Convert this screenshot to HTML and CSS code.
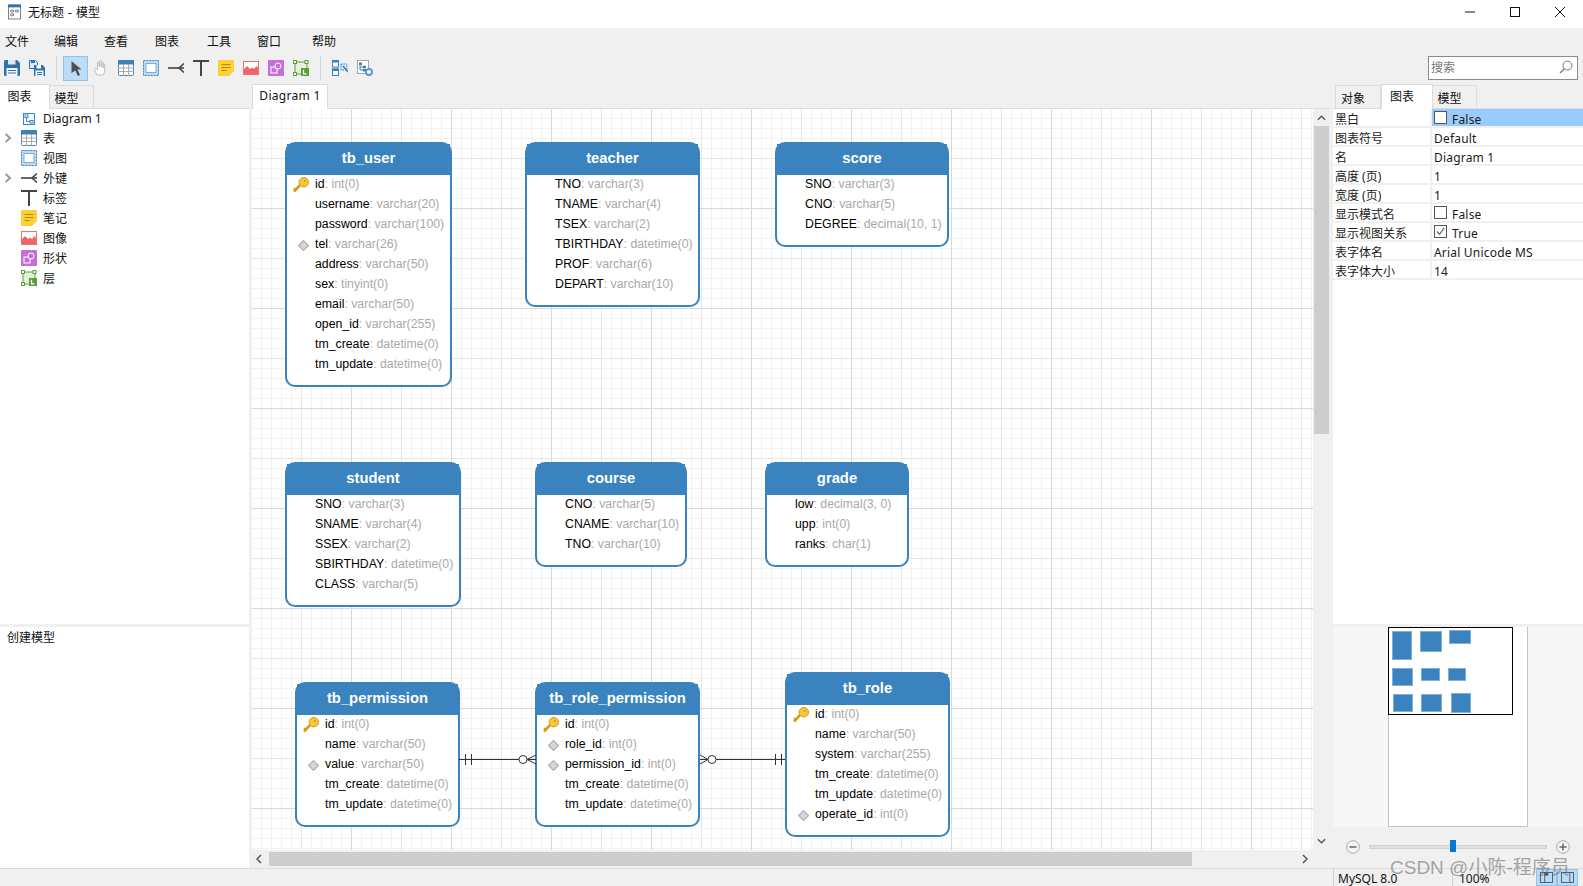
FILE: index.html

```html
<!DOCTYPE html>
<html lang="en">
<head>
  <meta charset="UTF-8" />
  <title>无标题 - 模型</title>
  <link rel="stylesheet" href="styles.css">
</head>
<body>
<svg class="defs" width="0" height="0">
  <symbol id="i-save" viewBox="0 0 16 16"><path d="M0 1.5C0 .7.7 0 1.5 0H13l3 3v11.5c0 .8-.7 1.5-1.5 1.5h-13C.7 16 0 15.300 0 14.500z" fill="#2e72ab"/><rect x="4" y="0" width="7.500" height="4.500" fill="#dfe9f2"/><rect x="2.500" y="8" width="11" height="8" fill="#f4f7fa"/><path d="M4 10.500h8M4 13h8" stroke="#2e72ab"/></symbol>
  <symbol id="i-saveall" viewBox="0 0 16 16"><path d="M.5 .5h6l2 2v6h-8z" fill="#dfe9f2" stroke="#2e72ab"/><rect x="2" y="0" width="4" height="3" fill="#2e72ab"/><path d="M5 5h8.500L16 7.500V16H5z" fill="#2e72ab"/><rect x="7.500" y="5" width="4.500" height="3.500" fill="#fff"/><rect x="6.500" y="10.500" width="8" height="5.500" fill="#fff"/><path d="M8 12.500h5M8 14.500h5" stroke="#2e72ab"/></symbol>
  <symbol id="i-pointer" viewBox="0 0 16 16"><path d="M3.500 1 13.500 9.500H9.500L12 15l-2.200 1-2.400-5.600L3.500 13z" fill="#4f4f4f"/></symbol>
  <symbol id="i-hand" viewBox="0 0 16 16"><path d="M4 15 1.500 9.500c-.5-1.300 1-2 1.800-.9L4.500 10V3c0-1.300 1.800-1.300 1.800 0v4-5.500c0-1.300 1.900-1.300 1.900 0V7V2.500c0-1.300 1.800-1.300 1.800 0V8V4.500c0-1.200 1.700-1.200 1.700 0V10c0 2.500-1 4-1.500 5z" fill="#fff" stroke="#bcbcbc"/></symbol>
  <symbol id="i-table" viewBox="0 0 16 16"><rect x=".5" y=".5" width="15" height="15" rx="1" fill="#fff" stroke="#4a86b8"/><path d="M1 0h14a1 1 0 0 1 1 1v3.500H0V1a1 1 0 0 1 1-1z" fill="#3d80b8"/><path d="M0 8h16M0 11.500h16M5.500 4v12M10.500 4v12" stroke="#a9a9a9"/></symbol>
  <symbol id="i-view" viewBox="0 0 16 16"><rect x=".5" y=".5" width="15" height="15" fill="#b9dbf6" stroke="#3d80b8" stroke-dasharray="2 1"/><rect x="3" y="3.500" width="10" height="9" fill="#fff" stroke="#7cb0da"/></symbol>
  <symbol id="i-fk" viewBox="0 0 16 16"><path d="M0 8h16" stroke="#444" stroke-width="1.600"/><path d="M16 3.500 11 8l5 4.500" fill="none" stroke="#444" stroke-width="1.600"/></symbol>
  <symbol id="i-label" viewBox="0 0 16 16"><path d="M0 1h16M8 1v15" stroke="#444" stroke-width="2" fill="none"/></symbol>
  <symbol id="i-note" viewBox="0 0 16 16"><path d="M1 0h14a1 1 0 0 1 1 1v10l-5 5H1a1 1 0 0 1-1-1V1a1 1 0 0 1 1-1z" fill="#fdd136"/><path d="M3.500 4.500h9M3.500 7.500h9M3.500 10.500h5" stroke="#b78510"/></symbol>
  <symbol id="i-image" viewBox="0 0 16 16"><rect x=".5" y="1.500" width="15" height="13" fill="#fff" stroke="#ee6e73"/><path d="M1 13 V9l3-3 3 3 2-1.500L11 9l2.500-3L15 8v6H1z" fill="#f0636b"/></symbol>
  <symbol id="i-shape" viewBox="0 0 16 16"><rect width="16" height="16" rx="1" fill="#c76fd9"/><rect x="3" y="7" width="6" height="6" fill="none" stroke="#fff"/><circle cx="10" cy="6" r="3" fill="#c76fd9" stroke="#fff"/></symbol>
  <symbol id="i-layer" viewBox="0 0 16 16"><rect x="2" y="2" width="12" height="12" fill="#e6f2da" stroke="#5a9e3a"/><rect x=".5" y=".5" width="3" height="3" fill="#fff" stroke="#5a9e3a"/><rect x="12" y=".5" width="3" height="3" fill="#fff" stroke="#5a9e3a"/><rect x=".5" y="12.500" width="3" height="3" fill="#fff" stroke="#5a9e3a"/><rect x="8" y="8" width="8" height="8" fill="#5a9e3a"/><path d="M10.500 9.800v4h3" stroke="#fff" fill="none" stroke-width="1.300"/></symbol>
  <symbol id="i-find" viewBox="0 0 16 16"><rect x=".5" y=".5" width="6" height="6.500" fill="#fff" stroke="#3d80b8"/><rect x="0" y="0" width="7" height="2.500" fill="#3d80b8"/><rect x=".5" y="9" width="6" height="6.500" fill="#fff" stroke="#3d80b8"/><rect x="0" y="8.500" width="7" height="2.500" fill="#3d80b8"/><rect x="9" y="4" width="6" height="6" fill="#d5e8f7" stroke="#3d80b8" stroke-dasharray="1.500 1"/><path d="m11 6 5 6" stroke="#3d80b8" stroke-width="1.500"/></symbol>
  <symbol id="i-viewdg" viewBox="0 0 16 16"><rect x=".5" y=".5" width="11" height="13" fill="#fff" stroke="#a5a5a5"/><path d="M3 4v6h3M3 7h3" stroke="#3d80b8" fill="none"/><rect x="2" y="2.500" width="3" height="2.500" fill="#3d80b8"/><rect x="6" y="5.800" width="3" height="2.500" fill="#3d80b8"/><rect x="6" y="9" width="3" height="2.500" fill="#3d80b8"/><circle cx="12" cy="12" r="3" fill="#fff" stroke="#5b93c4" stroke-width="1.800"/></symbol>
  <symbol id="i-diagram" viewBox="0 0 12 12"><rect x=".5" y=".5" width="11" height="11" fill="#fff" stroke="#2f87e0"/><path d="M3.500 4v4.500H7" stroke="#2f87e0" fill="none"/><rect x="2" y="2" width="3" height="2.500" fill="none" stroke="#2f87e0"/><rect x="7" y="7.500" width="3" height="2.500" fill="none" stroke="#2f87e0"/></symbol>
  <symbol id="i-key" viewBox="0 0 16 16"><path d="M1 14.500 7 8.200" stroke="#d49b17" stroke-width="2.600" fill="none"/><path d="M2.600 13 1 11" stroke="#d49b17" stroke-width="1.400"/><circle cx="10.800" cy="5.200" r="4.700" fill="#f8c63d" stroke="#d49b17"/><circle cx="11.800" cy="4" r="1" fill="#d49b17"/></symbol>
  <symbol id="i-fkey" viewBox="0 0 10 10"><path d="M5 .5 9.500 5 5 9.500 .5 5z" fill="#d6d6d6" stroke="#acacac"/></symbol>
  <symbol id="i-next" viewBox="0 0 8 10"><path d="M1.500 1 6 5 1.500 9" fill="none" stroke="#9b9b9b" stroke-width="2"/></symbol>
</svg>

<header class="titlebar">
  <svg class="app-icon" viewBox="0 0 14 16"><rect x=".5" y=".5" width="13" height="15" fill="#fff" stroke="#777"/><rect width="14" height="3" fill="#2e72ab"/><path d="M3 6h3v2H3zM8 6h3v2H8zM3 10h3v2H3z" fill="none" stroke="#777"/></svg>
  <span class="title-text">无标题 - 模型</span>
  <div class="win-btns">
    <svg viewBox="0 0 12 12"><path d="M1 6h10" stroke="#111"/></svg>
    <svg viewBox="0 0 12 12"><rect x="1.500" y="1.500" width="9" height="9" fill="none" stroke="#111"/></svg>
    <svg viewBox="0 0 12 12"><path d="m1 1 10 10M11 1 1 11" stroke="#111"/></svg>
  </div>
</header>

<nav class="menubar">
  <span>文件</span><span>编辑</span><span>查看</span><span>图表</span><span>工具</span><span>窗口</span><span>帮助</span>
</nav>

<div class="toolbar">
  <button class="tool"><svg><use href="#i-save"/></svg></button>
  <button class="tool"><svg><use href="#i-saveall"/></svg></button>
  <i class="tool-sep"></i>
  <button class="tool active"><svg><use href="#i-pointer"/></svg></button>
  <button class="tool"><svg><use href="#i-hand"/></svg></button>
  <button class="tool"><svg><use href="#i-table"/></svg></button>
  <button class="tool"><svg><use href="#i-view"/></svg></button>
  <button class="tool"><svg><use href="#i-fk"/></svg></button>
  <button class="tool"><svg><use href="#i-label"/></svg></button>
  <button class="tool"><svg><use href="#i-note"/></svg></button>
  <button class="tool"><svg><use href="#i-image"/></svg></button>
  <button class="tool"><svg><use href="#i-shape"/></svg></button>
  <button class="tool"><svg><use href="#i-layer"/></svg></button>
  <i class="tool-sep"></i>
  <button class="tool"><svg><use href="#i-find"/></svg></button>
  <button class="tool"><svg><use href="#i-viewdg"/></svg></button>
  <div class="search">
    <span>搜索</span>
    <svg viewBox="0 0 14 14"><circle cx="8.500" cy="5.500" r="4.500" fill="none" stroke="#777"/><path d="M5.300 8.700 1 13" stroke="#777" stroke-width="1.300"/></svg>
  </div>
</div>

<main class="main">
  <aside class="left">
    <div class="tabs">
      <span class="tab active tab-left">图表</span>
      <span class="tab tab-model">模型</span>
    </div>
    <ul class="tree">
      <li><svg class="ico-small"><use href="#i-diagram"/></svg><span>Diagram 1</span></li>
      <li><svg class="arrow"><use href="#i-next"/></svg><svg><use href="#i-table"/></svg><span>表</span></li>
      <li><svg><use href="#i-view"/></svg><span>视图</span></li>
      <li><svg class="arrow"><use href="#i-next"/></svg><svg><use href="#i-fk"/></svg><span>外键</span></li>
      <li><svg><use href="#i-label"/></svg><span>标签</span></li>
      <li><svg><use href="#i-note"/></svg><span>笔记</span></li>
      <li><svg><use href="#i-image"/></svg><span>图像</span></li>
      <li><svg><use href="#i-shape"/></svg><span>形状</span></li>
      <li><svg><use href="#i-layer"/></svg><span>层</span></li>
    </ul>
    <div class="hint">创建模型</div>
  </aside>

  <section class="center">
    <div class="tabs tabs-doc">
      <span class="tab active tab-doc">Diagram 1</span>
    </div>
    <div class="work">
      <div class="canvas">
        <div class="er t-user">
          <h3>tb_user</h3>
          <div class="row"><svg class="key"><use href="#i-key"/></svg><b>id</b>: int(0)</div>
          <div class="row"><b>username</b>: varchar(20)</div>
          <div class="row"><b>password</b>: varchar(100)</div>
          <div class="row"><svg class="fkey"><use href="#i-fkey"/></svg><b>tel</b>: varchar(26)</div>
          <div class="row"><b>address</b>: varchar(50)</div>
          <div class="row"><b>sex</b>: tinyint(0)</div>
          <div class="row"><b>email</b>: varchar(50)</div>
          <div class="row"><b>open_id</b>: varchar(255)</div>
          <div class="row"><b>tm_create</b>: datetime(0)</div>
          <div class="row"><b>tm_update</b>: datetime(0)</div>
        </div>
        <div class="er t-teacher">
          <h3>teacher</h3>
          <div class="row"><b>TNO</b>: varchar(3)</div>
          <div class="row"><b>TNAME</b>: varchar(4)</div>
          <div class="row"><b>TSEX</b>: varchar(2)</div>
          <div class="row"><b>TBIRTHDAY</b>: datetime(0)</div>
          <div class="row"><b>PROF</b>: varchar(6)</div>
          <div class="row"><b>DEPART</b>: varchar(10)</div>
        </div>
        <div class="er t-score">
          <h3>score</h3>
          <div class="row"><b>SNO</b>: varchar(3)</div>
          <div class="row"><b>CNO</b>: varchar(5)</div>
          <div class="row"><b>DEGREE</b>: decimal(10, 1)</div>
        </div>
        <div class="er t-student">
          <h3>student</h3>
          <div class="row"><b>SNO</b>: varchar(3)</div>
          <div class="row"><b>SNAME</b>: varchar(4)</div>
          <div class="row"><b>SSEX</b>: varchar(2)</div>
          <div class="row"><b>SBIRTHDAY</b>: datetime(0)</div>
          <div class="row"><b>CLASS</b>: varchar(5)</div>
        </div>
        <div class="er t-course">
          <h3>course</h3>
          <div class="row"><b>CNO</b>: varchar(5)</div>
          <div class="row"><b>CNAME</b>: varchar(10)</div>
          <div class="row"><b>TNO</b>: varchar(10)</div>
        </div>
        <div class="er t-grade">
          <h3>grade</h3>
          <div class="row"><b>low</b>: decimal(3, 0)</div>
          <div class="row"><b>upp</b>: int(0)</div>
          <div class="row"><b>ranks</b>: char(1)</div>
        </div>
        <div class="er t-perm">
          <h3>tb_permission</h3>
          <div class="row"><svg class="key"><use href="#i-key"/></svg><b>id</b>: int(0)</div>
          <div class="row"><b>name</b>: varchar(50)</div>
          <div class="row"><svg class="fkey"><use href="#i-fkey"/></svg><b>value</b>: varchar(50)</div>
          <div class="row"><b>tm_create</b>: datetime(0)</div>
          <div class="row"><b>tm_update</b>: datetime(0)</div>
        </div>
        <div class="er t-roleperm">
          <h3>tb_role_permission</h3>
          <div class="row"><svg class="key"><use href="#i-key"/></svg><b>id</b>: int(0)</div>
          <div class="row"><svg class="fkey"><use href="#i-fkey"/></svg><b>role_id</b>: int(0)</div>
          <div class="row"><svg class="fkey"><use href="#i-fkey"/></svg><b>permission_id</b>: int(0)</div>
          <div class="row"><b>tm_create</b>: datetime(0)</div>
          <div class="row"><b>tm_update</b>: datetime(0)</div>
        </div>
        <div class="er t-role">
          <h3>tb_role</h3>
          <div class="row"><svg class="key"><use href="#i-key"/></svg><b>id</b>: int(0)</div>
          <div class="row"><b>name</b>: varchar(50)</div>
          <div class="row"><b>system</b>: varchar(255)</div>
          <div class="row"><b>tm_create</b>: datetime(0)</div>
          <div class="row"><b>tm_update</b>: datetime(0)</div>
          <div class="row"><svg class="fkey"><use href="#i-fkey"/></svg><b>operate_id</b>: int(0)</div>
        </div>
        <!-- relation lines, in canvas coords -->
        <svg class="links" viewBox="0 0 1061 741">
          <g fill="none" stroke="#333">
            <path d="M207 650.500h77M213.500 645v11M219.500 645v11"/>
            <circle cx="271" cy="650.500" r="4" fill="#fff"/>
            <path d="M275 650.500 284 646M275 650.500 284 655"/>
            <path d="M448 650.500h85M523.500 645v11M529.500 645v11"/>
            <circle cx="460" cy="650.500" r="4" fill="#fff"/>
            <path d="M456 650.500 448 646M456 650.500 448 655"/>
          </g>
        </svg>
      </div>
      <div class="vscroll">
        <svg class="up" viewBox="0 0 10 6"><path d="M1 5 5 1l4 4" fill="none" stroke="#555" stroke-width="1.500"/></svg>
        <i class="thumb-v"></i>
        <svg class="down" viewBox="0 0 10 6"><path d="M1 1l4 4 4-4" fill="none" stroke="#555" stroke-width="1.500"/></svg>
      </div>
    </div>
    <div class="hscroll">
      <svg viewBox="0 0 6 10"><path d="M5 1 1 5l4 4" fill="none" stroke="#555" stroke-width="1.500"/></svg>
      <i class="thumb-h"></i>
      <svg class="right-arrow" viewBox="0 0 6 10"><path d="M1 1l4 4-4 4" fill="none" stroke="#555" stroke-width="1.500"/></svg>
    </div>
  </section>

  <aside class="right">
    <div class="tabs tabs-props">
      <span class="tab tab-obj">对象</span>
      <span class="tab active tab-dg">图表</span>
      <span class="tab tab-model">模型</span>
    </div>
    <div class="props">
      <div class="prop"><label>黑白</label><div class="val selected"><i class="check"></i>False</div></div>
      <div class="prop"><label>图表符号</label><div class="val">Default</div></div>
      <div class="prop"><label>名</label><div class="val">Diagram 1</div></div>
      <div class="prop"><label>高度 (页)</label><div class="val">1</div></div>
      <div class="prop"><label>宽度 (页)</label><div class="val">1</div></div>
      <div class="prop"><label>显示模式名</label><div class="val"><i class="check"></i>False</div></div>
      <div class="prop"><label>显示视图关系</label><div class="val"><i class="check"><svg viewBox="0 0 12 12"><path d="M2 6l3 3 5-7" fill="none" stroke="#666" stroke-width="1.300"/></svg></i>True</div></div>
      <div class="prop"><label>表字体名</label><div class="val">Arial Unicode MS</div></div>
      <div class="prop"><label>表字体大小</label><div class="val">14</div></div>
    </div>
    <div class="overview">
      <div class="page">
        <div class="viewport">
          <i class="m m1"></i><i class="m m2"></i><i class="m m3"></i>
          <i class="m m4"></i><i class="m m5"></i><i class="m m6"></i>
          <i class="m m7"></i><i class="m m8"></i><i class="m m9"></i>
        </div>
      </div>
    </div>
    <div class="zoombar">
      <svg viewBox="0 0 14 14"><circle cx="7" cy="7" r="6.300" fill="#f4f4f4" stroke="#aaa"/><path d="M3.500 7h7" stroke="#666" stroke-width="1.500"/></svg>
      <div class="slider"><i></i></div>
      <svg viewBox="0 0 14 14"><circle cx="7" cy="7" r="6.300" fill="#f4f4f4" stroke="#aaa"/><path d="M3.500 7h7M7 3.500v7" stroke="#666" stroke-width="1.500"/></svg>
    </div>
  </aside>
</main>

<footer class="status">
  <span class="st st-db">MySQL 8.0</span>
  <span class="st st-zoom">100%</span>
  <div class="st-btns">
    <span><svg viewBox="0 0 14 12"><rect x=".5" y=".5" width="13" height="11" fill="none" stroke="#555"/><path d="M5 1h4v3H5z" fill="#555"/><path d="M5 0v12" stroke="#555"/></svg></span>
    <span><svg viewBox="0 0 14 12"><rect x=".5" y=".5" width="13" height="11" fill="none" stroke="#555"/><path d="M9.500 0v12" stroke="#555"/></svg></span>
  </div>
</footer>
<div class="watermark">CSDN @小陈-程序员</div>
</body>
</html>
```

FILE: styles.css

```css
* {
  box-sizing: border-box;
}
html, body {
  margin: 0;
  height: 886px;
  overflow: hidden;
}
body {
  position: relative;
  display: flex;
  flex-direction: column;
  font-family: "Noto Sans", "Noto Sans CJK SC", sans-serif;
  font-size: 12px;
  color: #111;
  background: #f0f0f0;
}
.defs {
  position: absolute;
}
svg {
  display: block;
}

/* title bar */
.titlebar {
  height: 28px;
  background: #fff;
  display: flex;
  align-items: center;
  padding: 0 0 4px 8px;
}
.app-icon {
  width: 13px;
  height: 16px;
}
.title-text {
  margin-left: 7px;
  word-spacing: 1px;
}
.win-btns {
  margin-left: auto;
  display: flex;
  gap: 33px;
  padding-right: 17px;
}
.win-btns svg {
  width: 12px;
  height: 12px;
}

/* menu */
.menubar {
  height: 26px;
  display: grid;
  grid-template-columns: 49px 50px 51px 52px 50px 55px 40px;
  align-items: center;
  padding-left: 5px;
}

/* toolbar */
.toolbar {
  height: 30px;
  display: flex;
  align-items: center;
  padding-bottom: 2px;
}
.tool {
  width: 25px;
  height: 25px;
  padding: 0;
  border: 1px solid transparent;
  background: none;
  display: flex;
  align-items: center;
  justify-content: center;
}
.tool:first-child {
  margin-left: -1px;
}
.tool svg {
  width: 16px;
  height: 16px;
}
.tool.active {
  background: #bddcf5;
  border-color: #8ec4ee;
}
.tool-sep {
  width: 14px;
  height: 24px;
  background: linear-gradient(#d5d5d5, #d5d5d5) center / 1px 100% no-repeat;
}
.search {
  margin-left: auto;
  margin-right: 5px;
  width: 150px;
  height: 24px;
  border: 1px solid #8a8a8a;
  background: #fff;
  display: flex;
  align-items: center;
  justify-content: space-between;
  padding: 0 4px 2px 2px;
  color: #777;
}
.search svg {
  width: 14px;
  height: 14px;
}

/* main three columns */
.main {
  height: 784px;
  display: flex;
  gap: 3px;
}
.left {
  width: 249px;
  display: flex;
  flex-direction: column;
}
.center {
  width: 1078px;
  display: flex;
  flex-direction: column;
}
.right {
  width: 250px;
  display: flex;
  flex-direction: column;
}

.tabs {
  height: 25px;
  display: flex;
  align-items: flex-end;
  border-bottom: 1px solid #dcdcdc;
}
.tab {
  height: 23px;
  border: 1px solid #dcdcdc;
  border-bottom: none;
  display: flex;
  align-items: center;
  justify-content: center;
  background: #f0f0f0;
  padding: 2px 10px 0 0;
}
.tab.active {
  height: 25px;
  margin-bottom: -1px;
  background: #fff;
  padding: 0 10px 3px 0;
}
.tab-left {
  width: 50px;
  border-left: none;
}
.tab-model {
  width: 44px;
  border-left: none;
}
.tab.tab-doc {
  width: 76px;
  letter-spacing: .3px;
  padding-right: 0;
}
.tabs-props {
  padding-left: 2px;
}
.tab-obj {
  width: 46px;
}
.tab-dg {
  width: 52px;
}

/* left tree */
.tree {
  height: 515px;
  margin: 0;
  padding: 0;
  list-style: none;
  background: #fff;
}
.tree li {
  height: 20px;
  display: flex;
  align-items: center;
  padding: 0 0 2px 21px;
  position: relative;
}
.tree li:first-child {
  padding: 0 0 1px 23px;
}
.tree svg {
  width: 16px;
  height: 16px;
  flex: none;
}
.tree .ico-small {
  width: 12px;
  height: 12px;
  margin-right: 8px;
}
.tree span {
  margin-left: 6px;
}
.tree .ico-small + span {
  margin-left: 0;
}
.tree .arrow {
  position: absolute;
  left: 4px;
  top: 4px;
  width: 8px;
  height: 10px;
}
.hint {
  flex: 1;
  margin-top: 3px;
  background: #fff;
  padding: 1px 7px;
}

/* canvas */
.work {
  height: 741px;
  display: flex;
}
.canvas {
  position: relative;
  width: 1061px;
  overflow: hidden;
  background-color: #fff;
  background-image:
    linear-gradient(#d9d9d9 1px, transparent 1px),
    linear-gradient(90deg, #d9d9d9 1px, transparent 1px),
    linear-gradient(#e6e6e6 1px, transparent 1px),
    linear-gradient(90deg, #e6e6e6 1px, transparent 1px),
    linear-gradient(#f2f2f2 1px, transparent 1px),
    linear-gradient(90deg, #f2f2f2 1px, transparent 1px);
  background-size: 100px 100px, 100px 100px, 50px 50px, 50px 50px, 10px 10px, 10px 10px;
  background-position: -1px -1px;
}
.links {
  position: absolute;
  left: 0;
  top: 0;
  width: 1061px;
  height: 741px;
}
.er {
  position: absolute;
  background: #fff;
  border: 2px solid #3a83bf;
  border-radius: 10px;
  padding-bottom: 10px;
  font-family: "Liberation Sans", Arial, sans-serif;
  font-size: 12.3px;
  color: #a9a9a9;
}
.er h3 {
  margin: 0;
  height: 31px;
  background: #3a83bf;
  color: #fff;
  font-size: 14.8px;
  font-weight: bold;
  text-align: center;
  line-height: 28px;
}
.row {
  height: 20px;
  line-height: 18px;
  display: flex;
  padding-left: 28px;
  position: relative;
  white-space: pre;
}
.row b {
  font-weight: normal;
  color: #000;
}
.key {
  position: absolute;
  left: 6px;
  top: 2px;
  width: 16px;
  height: 16px;
}
.fkey {
  position: absolute;
  left: 11px;
  top: 5px;
  width: 11px;
  height: 11px;
}
.t-user { left: 33px; top: 33px; width: 167px; }
.t-teacher { left: 273px; top: 33px; width: 175px; }
.t-score { left: 523px; top: 33px; width: 174px; }
.t-student { left: 33px; top: 353px; width: 176px; }
.t-course { left: 283px; top: 353px; width: 152px; }
.t-grade { left: 513px; top: 353px; width: 144px; }
.t-perm { left: 43px; top: 573px; width: 165px; }
.t-roleperm { left: 283px; top: 573px; width: 165px; }
.t-role { left: 533px; top: 563px; width: 165px; }

/* scrollbars */
.vscroll {
  width: 17px;
  position: relative;
  padding: 0 1px;
}
.vscroll .up, .vscroll .down {
  position: absolute;
  left: 4px;
  width: 9px;
  height: 6px;
}
.vscroll .up { top: 6px; }
.vscroll .down { bottom: 6px; }
.thumb-v {
  display: block;
  margin-top: 17px;
  width: 15px;
  height: 308px;
  background: #cdcdcd;
}
.hscroll {
  height: 18px;
  display: flex;
  align-items: center;
  padding-left: 4px;
}
.hscroll svg {
  width: 6px;
  height: 10px;
}
.thumb-h {
  margin-left: 7px;
  width: 923px;
  height: 14px;
  background: #cdcdcd;
}
.hscroll .right-arrow {
  margin-left: 110px;
}

/* right properties */
.props {
  height: 515px;
  background: #fff;
  color: #1a1a1a;
}
.prop {
  height: 19px;
  display: flex;
  border-bottom: 2px solid #f0f0f0;
}
.prop label {
  width: 99px;
  padding-left: 2px;
  line-height: 22px;
  border-right: 2px solid #f0f0f0;
}
.val {
  flex: 1;
  padding-left: 2px;
  line-height: 21px;
  display: flex;
  letter-spacing: .2px;
}
.val.selected {
  background: #99ccfb;
}
.check {
  width: 13px;
  height: 13px;
  margin: 2px 5px 0 0;
  border: 1px solid #555;
  background: #fff;
}
.overview {
  height: 200px;
  margin-top: 3px;
  background: #f7f7f7;
  padding-left: 55px;
}
.page {
  width: 140px;
  height: 200px;
  background: #fff;
  border: solid #c4c4c4;
  border-width: 0 1px 1px 1px;
}
.viewport {
  position: relative;
  width: 125px;
  height: 88px;
  margin-left: -1px;
  border: 1px solid #000;
}
.m {
  position: absolute;
  background: #3a83bf;
  border: 1px solid #7fb0d8;
}
.m1 { left: 3px; top: 3px; width: 20px; height: 29px; }
.m2 { left: 31px; top: 3px; width: 22px; height: 21px; }
.m3 { left: 60px; top: 2px; width: 22px; height: 14px; }
.m4 { left: 3px; top: 40px; width: 21px; height: 18px; }
.m5 { left: 32px; top: 40px; width: 19px; height: 13px; }
.m6 { left: 59px; top: 40px; width: 18px; height: 13px; }
.m7 { left: 4px; top: 66px; width: 20px; height: 18px; }
.m8 { left: 32px; top: 66px; width: 21px; height: 18px; }
.m9 { left: 62px; top: 65px; width: 20px; height: 20px; }
.zoombar {
  flex: 1;
  display: flex;
  align-items: center;
  padding: 0 13px 1px 13px;
  gap: 9px;
}
.zoombar svg {
  width: 14px;
  height: 14px;
}
.slider {
  position: relative;
  width: 178px;
  height: 4px;
  background: #e0e0e0;
  border: 1px solid #d2d2d2;
}
.slider i {
  position: absolute;
  left: 80px;
  top: -6px;
  width: 6px;
  height: 12px;
  background: #0078d7;
}

/* status bar */
.status {
  height: 18px;
  border-top: 1px solid #dcdcdc;
  display: flex;
  padding-left: 1333px;
  position: relative;
}
.st {
  height: 17px;
  line-height: 19px;
  border-left: 1px solid #d0d0d0;
  white-space: nowrap;
}
.st-db {
  width: 119px;
  padding-left: 4px;
}
.st-zoom {
  width: 84px;
  padding-left: 6px;
}
.st-btns {
  display: flex;
}
.st-btns span {
  width: 21px;
  height: 17px;
  background: #b5dcfb;
  border: 1px solid #8ec4ee;
  display: flex;
  align-items: center;
  justify-content: center;
}
.st-btns svg {
  width: 13px;
  height: 11px;
}
.watermark {
  position: absolute;
  left: 1390px;
  top: 852px;
  font-family: "Liberation Sans", "Noto Sans CJK SC", sans-serif;
  font-size: 19px;
  color: rgba(110, 110, 110, .6);
  white-space: nowrap;
}
```
